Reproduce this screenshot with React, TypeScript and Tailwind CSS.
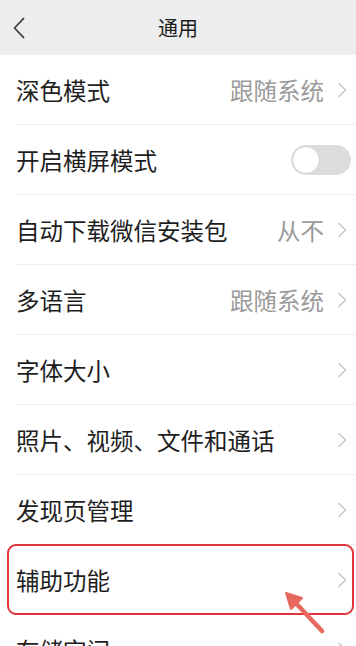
import React from 'react';

type Row = {
  label: string;
  value?: string;
  toggle?: boolean;
  highlight?: boolean;
};

const rows: Row[] = [
  { label: '深色模式', value: '跟随系统' },
  { label: '开启横屏模式', toggle: true },
  { label: '自动下载微信安装包', value: '从不' },
  { label: '多语言', value: '跟随系统' },
  { label: '字体大小' },
  { label: '照片、视频、文件和通话' },
  { label: '发现页管理' },
  { label: '辅助功能', highlight: true },
  { label: '存储空间' },
];

const Chevron = () => (
  <svg width="10" height="16" viewBox="0 0 10 16" fill="none" className="shrink-0">
    <path d="M2 1.5 L8.5 8 L2 14.5" stroke="#c4c4c4" strokeWidth="1.4" strokeLinecap="round" strokeLinejoin="round" />
  </svg>
);

const Toggle = () => (
  <div className="w-[60px] h-[30px] rounded-full bg-[#dcdcdc] p-[1px] flex items-center">
    <div className="w-[28px] h-[28px] rounded-full bg-white border border-[#d4d4d4]" />
  </div>
);

const App: React.FC = () => {
  return (
    <div
      className="w-[356px] h-[646px] overflow-hidden bg-white"
      style={{ fontFamily: '"Noto Sans CJK SC", "Noto Sans", sans-serif' }}
    >
      <div className="h-[55px] bg-[#ededed] flex items-center relative">
        <svg width="12" height="22" viewBox="0 0 12 22" fill="none" className="ml-[13px]">
          <path d="M10.5 1.5 L1.5 11 L10.5 20.5" stroke="#3a3a3a" strokeWidth="1.8" strokeLinecap="round" strokeLinejoin="round" />
        </svg>
        <div className="absolute inset-0 flex items-center justify-center text-[20px] text-[#1c1c1c]">通用</div>
      </div>

      {rows.map((row) => (
        <div key={row.label} className="relative h-[70px] pl-4">
          <div className="h-full flex items-center border-b border-[#ededed] pr-[9px]">
            <span className="flex-1 text-[23.5px] text-[#1e1e1e] leading-none pt-[2px]">{row.label}</span>
            {row.value && (
              <span className="text-[23.5px] text-[#9a9a9a] leading-none mr-[13px] pt-[2px]">{row.value}</span>
            )}
            {row.toggle ? <div className="mr-[-4px]"><Toggle /></div> : <Chevron />}
          </div>
          {row.highlight && (
            <>
              <div className="absolute left-[7px] right-[2px] top-[-1px] bottom-[0px] border-[2.5px] border-[#e2353b] rounded-[9px] pointer-events-none" />
              <svg
                width="50"
                height="50"
                viewBox="0 0 50 50"
                className="absolute left-[280px] top-[42px] pointer-events-none z-10"
              >
                <path d="M42 44 L12 12" stroke="#e8695f" strokeWidth="4.5" strokeLinecap="round" />
                <path d="M6 6 L22 11 L11 22 Z" fill="#e8695f" stroke="#e8695f" strokeWidth="2" strokeLinejoin="round" />
              </svg>
            </>
          )}
        </div>
      ))}
    </div>
  );
};

export default App;
